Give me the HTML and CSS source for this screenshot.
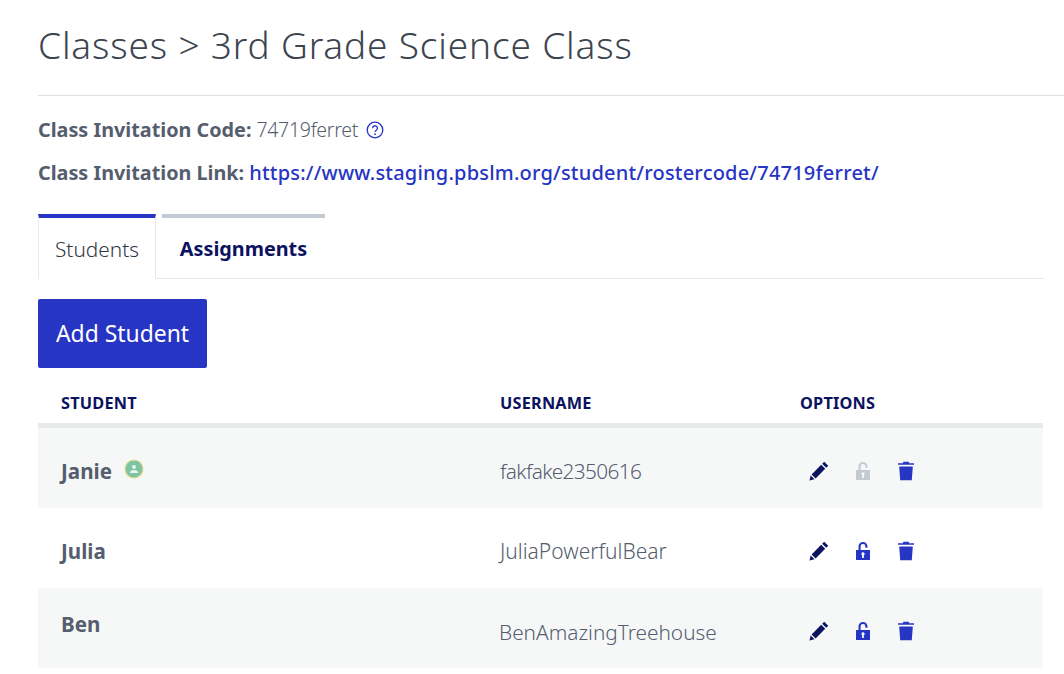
FILE: index.html
```html
<!DOCTYPE html>
<html>
<head>
    <title>3rd Grade Science Class</title>
    <link rel="stylesheet" href="styles.css">
</head>
<body>
    <h1 class="title">Classes &gt; 3rd Grade Science Class</h1>
    <div class="info">
        <p class="info-line"><b>Class Invitation Code:</b> <span class="code">74719ferret</span>
            <svg class="help" viewBox="0 0 18 18" width="18" height="18"><circle cx="9" cy="9" r="7.8" fill="none" stroke="#2635c4" stroke-width="1.3"/><path d="M6.6 7.2a2.4 2.4 0 1 1 3.7 2c-.9.6-1.3 1-1.3 1.9" fill="none" stroke="#2635c4" stroke-width="1.3"/><circle cx="9" cy="13.2" r=".9" fill="#2635c4"/></svg>
        </p>
        <p class="info-line"><b>Class Invitation Link:</b> <a class="link" href="#">https://www.staging.pbslm.org/student/rostercode/74719ferret/</a></p>
    </div>
    <div class="tabs">
        <div class="tab active">Students</div>
        <div class="tab">Assignments</div>
    </div>
    <button class="add-btn">Add Student</button>
    <div class="table">
        <div class="row head">
            <div class="c-student">STUDENT</div>
            <div class="c-user">USERNAME</div>
            <div class="c-opts">OPTIONS</div>
        </div>
        <div class="row shaded">
            <div class="c-student name">Janie
                <svg class="badge" viewBox="0 0 20 20" width="20" height="20"><circle cx="10" cy="10" r="9" fill="#7cc4a4" stroke="#e6d98a" stroke-width="1.2"/><circle cx="10" cy="8" r="2" fill="#e8f5ee"/><path d="M5.800 14c.3-2.200 2-3 4.200-3s3.900.8 4.200 3z" fill="#e8f5ee"/></svg>
            </div>
            <div class="c-user tight">fakfake2350616</div>
            <div class="c-opts icons">
                <svg class="pencil" viewBox="0 0 20 20"><use href="#i-pencil"/></svg>
                <svg class="lock off" viewBox="0 0 16 20"><use href="#i-lock"/></svg>
                <svg class="trash" viewBox="0 0 16 20"><use href="#i-trash"/></svg>
            </div>
        </div>
        <div class="row">
            <div class="c-student name">Julia</div>
            <div class="c-user">JuliaPowerfulBear</div>
            <div class="c-opts icons">
                <svg class="pencil" viewBox="0 0 20 20"><use href="#i-pencil"/></svg>
                <svg class="lock" viewBox="0 0 16 20"><use href="#i-lock"/></svg>
                <svg class="trash" viewBox="0 0 16 20"><use href="#i-trash"/></svg>
            </div>
        </div>
        <div class="row shaded last">
            <div class="c-student name">Ben</div>
            <div class="c-user">BenAmazingTreehouse</div>
            <div class="c-opts icons">
                <svg class="pencil" viewBox="0 0 20 20"><use href="#i-pencil"/></svg>
                <svg class="lock" viewBox="0 0 16 20"><use href="#i-lock"/></svg>
                <svg class="trash" viewBox="0 0 16 20"><use href="#i-trash"/></svg>
            </div>
        </div>
    </div>

    <svg class="defs" width="0" height="0">
        <symbol id="i-pencil" viewBox="0 0 20 20"><path d="M15.200.8l4 4-2 2-4-4zM12.200 3.800l4 4L6.600 17.400l-4-4zM1.700 14.500l3.800 3.800-5 1.200z"/></symbol>
        <symbol id="i-lock" viewBox="0 0 16 20"><path fill-rule="evenodd" d="M3.500 9V5.500a4.500 4.500 0 0 1 9 0v1.300h-2.100V5.500a2.400 2.400 0 0 0-4.800 0V9H15v10H1V9zM8 11.300a1.700 1.700 0 0 0-.9 3.100V17h1.800v-2.600A1.700 1.700 0 0 0 8 11.300z"/></symbol>
        <symbol id="i-trash" viewBox="0 0 16 20"><path d="M5.500.8h5l.8 1.500H16v1.500H0V2.300h4.700zM1.200 5.500h13.600l-1 13.700H2.200z"/></symbol>
    </svg>
</body>
</html>
```

FILE: styles.css
```css
body {
    margin: 0;
    padding-left: 38px;
    font-family: "Noto Sans", sans-serif;
    color: #555d6e;
    background: #fff;
    overflow: hidden;
}

.title {
    margin: 0;
    height: 96px;
    box-sizing: border-box;
    padding-top: 21px;
    border-bottom: 1px solid #dcdfe3;
    font-size: 37px;
    line-height: 48px;
    font-weight: 300;
    letter-spacing: 0.85px;
    color: #3c4450;
}

.info {
    padding-top: 22px;
}

.info-line {
    margin: 0 0 19px;
    height: 24px;
    display: flex;
    align-items: center;
    gap: 5px;
    font-size: 20px;
    line-height: 24px;
}

.info-line b {
    font-size: 19.800px;
    font-weight: 700;
}

.code {
    font-size: 19.500px;
    font-weight: 300;
    letter-spacing: -0.3px;
}

.help {
    margin-left: 3px;
}

.link {
    color: #2635c4;
    text-decoration: none;
    font-weight: 500;
    letter-spacing: 0.2px;
}

.tabs {
    margin-top: 29px;
    height: 64px;
    display: flex;
    border-bottom: 1px solid #e6e8ea;
    margin-right: 20px;
}

.tab {
    width: 163px;
    margin-right: 6px;
    box-sizing: border-box;
    border-top: 4px solid #c4cad3;
    padding-top: 18px;
    text-align: center;
    font-size: 19.800px;
    line-height: 26px;
    font-weight: 700;
    color: #0b1260;
}

.tab.active {
    width: 118px;
    height: 65px;
    border-top-color: #2635c4;
    border-left: 1px solid #e6e8ea;
    border-right: 1px solid #e6e8ea;
    background: #fff;
    font-size: 20.800px;
    font-weight: 300;
    color: #2f3745;
}

.add-btn {
    display: block;
    margin-top: 20px;
    width: 169px;
    height: 69px;
    border: none;
    border-radius: 2px;
    background: #2635c4;
    color: #fff;
    font-family: inherit;
    font-size: 22.900px;
    font-weight: 400;
}

.table {
    margin-right: 21px;
}

.row {
    display: flex;
    align-items: center;
    height: 80px;
}

.row.shaded {
    background: #f6f8f8;
}

.row.head {
    height: 60px;
    padding-top: 14px;
    box-sizing: border-box;
    border-bottom: 5px solid #e7e9ea;
    font-size: 16.300px;
    font-weight: 700;
    letter-spacing: 0.2px;
    color: #0b1260;
}

.c-student {
    width: 439px;
    padding-left: 23px;
    display: flex;
    align-items: center;
    gap: 12px;
}

.c-user {
    width: 300px;
    margin-top: 6px;
    font-size: 21px;
    font-weight: 300;
}

.c-user.tight {
    font-size: 20.800px;
    letter-spacing: -0.65px;
}

.head .c-user {
    margin-top: 0;
    font-size: 16.300px;
    font-weight: 700;
}

.name {
    margin-top: 5px;
    font-size: 20.600px;
    font-weight: 700;
}

.badge {
    margin-top: -3px;
}

.last .name {
    margin-top: -8px;
}

.last .c-user {
    margin-top: 8px;
    margin-left: -1px;
    margin-right: 1px;
    font-size: 20.800px;
}

.icons {
    display: flex;
    align-items: center;
    margin-top: 5px;
}

.icons svg {
    display: block;
}

.pencil {
    width: 20px;
    height: 20px;
    margin-left: 9px;
    fill: #0b1260;
}

.lock {
    width: 16px;
    height: 20px;
    margin-left: 26px;
    fill: #2635c4;
}

.lock.off {
    fill: #c4cad3;
}

.trash {
    width: 16px;
    height: 20px;
    margin-left: 27px;
    fill: #2635c4;
}

.defs {
    position: absolute;
}
```
